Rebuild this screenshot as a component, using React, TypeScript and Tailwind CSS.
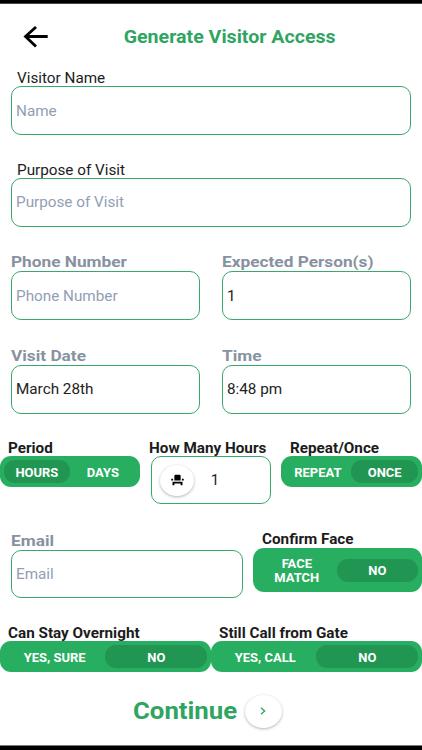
import { clsx } from 'clsx';
import type { ReactNode } from 'react';

const Stretch = ({ children, className = 'scale-x-[1.08]' }: { children: ReactNode; className?: string }) => (
    <span className={clsx('inline-block whitespace-nowrap', className)}>{children}</span>
);

const Label = ({ text, muted, className }: { text: string; muted?: boolean; className?: string }) => (
    <div className={clsx('h-[17px]', muted ? 'text-[15px] leading-[17px] font-bold text-[#8792a0]' : 'text-[14px] text-[#1c1c1c]', className)}>
        <Stretch className={clsx('origin-left', muted ? 'scale-x-[1.15]' : 'scale-x-[1.09]')}>{text}</Stretch>
    </div>
);

const Field = ({ value, placeholder, className }: { value?: string; placeholder?: string; className?: string }) => (
    <div className={clsx('flex items-center rounded-[10px] border border-[#3aa76d] pl-[4.5px] text-[14px]', className ?? 'h-[49px] pt-[2px]')}>
        <Stretch className={clsx('origin-left scale-x-[1.09]', value ? 'text-[#222]' : 'text-[#919eb3]')}>{value ?? placeholder}</Stretch>
    </div>
);

const Option = ({ text, active, className }: { text: ReactNode; active?: boolean; className?: string }) => (
    <div className={clsx('flex h-[23px] items-center justify-center rounded-[11px] pt-[2px] text-center leading-[14px]', active && 'bg-[#219653]', className)}>
        <Stretch>{text}</Stretch>
    </div>
);

const Toggle = ({ children, className }: { children: ReactNode; className?: string }) => (
    <div className={clsx('flex items-center rounded-[11px] bg-[#27ae60] px-1 text-[12px] font-bold text-white', className)}>{children}</div>
);

const App = () => {
    return (
        <div className="flex h-[750px] w-[422px] flex-col overflow-hidden border-t-[3px] border-b-4 border-black bg-white font-['Roboto',sans-serif] shadow-[inset_0_1px_#444,inset_0_-1px_#777]">
            <header className="mt-px flex h-[65px] shrink-0 items-center">
                <svg className="ml-[23px] h-[22px] w-[25px]" viewBox="0 0 25 22" fill="none" stroke="#000" strokeWidth="2.8">
                    <path d="M24.7 10.5H2.5M13 1L2.5 10.5L13 20.5" />
                </svg>
                <h1 className="ml-[76px] flex w-[211px] justify-center pt-[2px] text-[17.5px] font-bold text-[#30a562]">
                    <Stretch className="scale-x-[1.12]">Generate Visitor Access</Stretch>
                </h1>
            </header>

            <main className="flex shrink-0 flex-col">
                <section className="h-[92px] pr-[11px] pl-[10.5px]">
                    <Label text="Visitor Name" className="pl-[6px] leading-[19px]" />
                    <Field placeholder="Name" />
                </section>
                <section className="h-[93px] pr-[11px] pl-[10.5px]">
                    <Label text="Purpose of Visit" className="pl-[6px] leading-[18px]" />
                    <Field placeholder="Purpose of Visit" className="h-[49px]" />
                </section>
                <section className="grid h-[93.5px] grid-cols-2 gap-[22px] pr-[11px] pl-[10.5px]">
                    <div>
                        <Label text="Phone Number" muted />
                        <Field placeholder="Phone Number" />
                    </div>
                    <div>
                        <Label text="Expected Person(s)" muted />
                        <Field value="1" />
                    </div>
                </section>
                <section className="grid h-[91.5px] grid-cols-2 gap-[22px] pr-[11px] pl-[10.5px]">
                    <div>
                        <Label text="Visit Date" muted />
                        <Field value="March 28th" className="h-[49px]" />
                    </div>
                    <div>
                        <Label text="Time" muted />
                        <Field value="8:48 pm" className="h-[49px]" />
                    </div>
                </section>

                <section className="flex h-[92px]">
                    <div className="w-[140px]">
                        <Label text="Period" className="pl-[8px] leading-[18px] font-bold" />
                        <Toggle className="h-[31px]">
                            <Option text="HOURS" active className="w-[66px]" />
                            <Option text="DAYS" className="w-[66px]" />
                        </Toggle>
                    </div>
                    <div className="ml-[9px] w-[122px]">
                        <Label text="How Many Hours" className="leading-[18px] font-bold" />
                        <div className="ml-[2px] flex h-[48px] w-[119.5px] items-center rounded-[10px] border border-[#3aa76d] pl-[8px] text-[14px] text-[#222]">
                            <div className="flex h-[31px] w-[34px] items-center justify-center rounded-[50%] bg-white shadow-[0_1px_3px_rgba(0,0,0,0.3)]">
                                <svg className="h-[14px] w-[15px]" viewBox="0 0 24 24" preserveAspectRatio="none">
                                    <path d="M4 18v3h3v-3h10v3h3v-6H4zm15-8h3v3h-3zM2 10h3v3H2zm15 3H7V5c0-1.1.9-2 2-2h6c1.1 0 2 .9 2 2v8z" />
                                </svg>
                            </div>
                            <Stretch className="ml-[17px] scale-x-[1.08] pt-[1px]">1</Stretch>
                        </div>
                    </div>
                    <div className="ml-[10px] w-[141px]">
                        <Label text="Repeat/Once" className="pl-[8.5px] leading-[18px] font-bold" />
                        <Toggle className="h-[31px]">
                            <Option text="REPEAT" className="w-[66px]" />
                            <Option text="ONCE" active className="w-[67px]" />
                        </Toggle>
                    </div>
                </section>

                <section className="flex h-[93px]">
                    <div className="ml-[10.5px] w-[232px] pt-[1.5px]">
                        <Label text="Email" muted />
                        <Field placeholder="Email" className="h-[48.5px] pt-[1.5px]" />
                    </div>
                    <div className="ml-[10.5px] w-[169px]">
                        <Label text="Confirm Face" className="pl-[8.5px] leading-[17px] font-bold" />
                        <Toggle className="h-[44px]">
                            <Option
                                text={
                                    <>
                                        FACE
                                        <br />
                                        MATCH
                                    </>
                                }
                                className="w-[80px]"
                            />
                            <Option text="NO" active className="w-[81px]" />
                        </Toggle>
                    </div>
                </section>

                <section className="grid h-[48px] grid-cols-2">
                    <div>
                        <Label text="Can Stay Overnight" className="pl-[8px] leading-[18px] font-bold" />
                        <Toggle className="h-[31px]">
                            <Option text="YES, SURE" className="w-[101px]" />
                            <Option text="NO" active className="w-[102px]" />
                        </Toggle>
                    </div>
                    <div>
                        <Label text="Still Call from Gate" className="pl-[8px] leading-[18px] font-bold" />
                        <Toggle className="h-[31px]">
                            <Option text="YES, CALL" className="w-[101px]" />
                            <Option text="NO" active className="w-[102px]" />
                        </Toggle>
                    </div>
                </section>
            </main>

            <footer className="mt-[21px] flex shrink-0 items-center">
                <div className="ml-[133px] w-[111.5px] pt-[2px] text-[23px] leading-[34px] font-bold text-[#30a562]">
                    <Stretch className="origin-left scale-x-[1.12]">Continue</Stretch>
                </div>
                <div className="flex h-[33px] w-[37px] items-center justify-center rounded-[50%] bg-white shadow-[0_1px_3px_rgba(0,0,0,0.3)]">
                    <svg className="h-[8px] w-[6px]" viewBox="0 0 6 8" fill="none" stroke="#30a562" strokeWidth="1.4">
                        <path d="M1 0.8L4.6 4L1 7.2" />
                    </svg>
                </div>
            </footer>
        </div>
    );
};

export default App;
